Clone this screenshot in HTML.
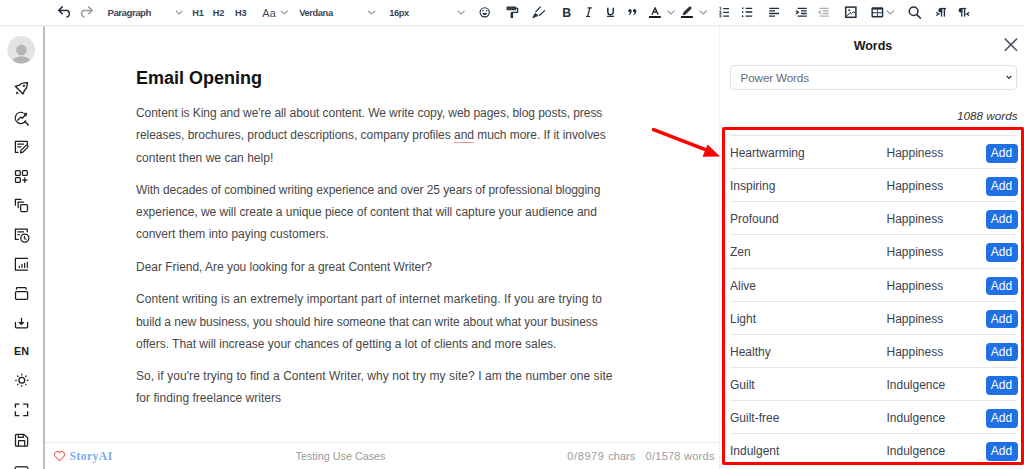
<!DOCTYPE html>
<html><head><meta charset="utf-8">
<style>
*{margin:0;padding:0;box-sizing:border-box}
html,body{width:1024px;height:469px;overflow:hidden;background:#fff;font-family:"Liberation Sans",sans-serif}
.abs{position:absolute}
#tb{position:absolute;left:0;top:0;width:1024px;height:26px;border-bottom:1px solid #ececec}
#sb{position:absolute;left:0;top:26px;width:43px;height:443px}
#sbline{position:absolute;left:43px;top:26px;width:2px;height:443px;background:#bdbdc1}
#ed{position:absolute;left:45px;top:26px;width:675px;height:443px;border-right:1px dotted #e2e2e2}
#ed h1{position:absolute;left:91px;top:41.5px;font-size:18px;line-height:20px;font-weight:bold;color:#111}
#txt{position:absolute;left:91px;top:76.2px;width:560px;font-size:12px;line-height:22.15px;color:#474747}
#txt p{margin-bottom:10.4px;white-space:nowrap}
#foot{position:absolute;left:0;top:416px;width:674px;border-top:1px dotted #d9d9d9;height:27px}
#panel{position:absolute;left:720px;top:26px;width:304px;height:443px}
.row{position:absolute;left:10px;width:287px;height:33.15px;border-top:1px solid #e6e6e6}
.row .w{position:absolute;left:0;top:1px;font-size:12px;line-height:32px;color:#3b4250}
.row .c{position:absolute;left:156.5px;top:1px;font-size:12px;line-height:32px;color:#3b4250}
.row .b{position:absolute;left:255.5px;top:8px;width:32px;height:18.5px;border-radius:4px;background:#1f6fe5;color:#fff;font-size:12px;line-height:18.5px;text-align:center}
</style></head><body>
<div id="tb">
<svg class="abs" style="left:0;top:0" width="1024" height="26" viewBox="0 0 1024 26" fill="none" stroke="#222f3e" stroke-width="1.5" stroke-linecap="round" stroke-linejoin="round">
  <!-- undo -->
  <path d="M62.3 6.9L58.7 10.4L62.3 13.8M58.9 10.4H65.2A3.3 3.3 0 0 1 66.9 16.9"/>
  <!-- redo -->
  <path d="M88.6 6.9L92.2 10.4L88.6 13.8M92 10.4H85.7A3.3 3.3 0 0 0 84 16.9" stroke="#9aa0a6"/>
  <!-- chevrons -->
  <g stroke="#8a9099" stroke-width="1.1">
    <path d="M176.2 11.2L179.1 13.9L182 11.2"/>
    <path d="M281.2 11.2L284.3 13.9L287.4 11.2"/>
    <path d="M368.2 11.2L371.5 13.9L374.8 11.2"/>
    <path d="M457.8 11.2L461 13.9L464.2 11.2"/>
    <path d="M667.8 10.8L671 13.8L674.2 10.8"/>
    <path d="M700 10.8L703.3 13.8L706.6 10.8"/>
    <path d="M887 10.8L890.4 13.8L893.8 10.8"/>
  </g>
  <!-- emoji -->
  <circle cx="484.7" cy="12.35" r="4.6" stroke-width="1.2"/>
  <circle cx="482.8" cy="10.7" r="0.75" fill="#222f3e" stroke="none"/>
  <circle cx="486.7" cy="10.7" r="0.75" fill="#222f3e" stroke="none"/>
  <path d="M482.5 13.1H487A2.25 2.1 0 0 1 482.5 13.1Z" fill="#222f3e" stroke="none"/>
  <!-- paint roller -->
  <rect x="506.6" y="6.5" width="9.6" height="3.8" rx="0.6" fill="#222f3e" stroke="none"/><rect x="507.9" y="7.5" width="0.8" height="0.7" fill="#8a929c" stroke="none"/><rect x="507.9" y="8.9" width="0.8" height="0.7" fill="#8a929c" stroke="none"/><rect x="509.5" y="8.2" width="0.8" height="0.7" fill="#8a929c" stroke="none"/><rect x="511.1" y="7.5" width="0.8" height="0.7" fill="#8a929c" stroke="none"/><rect x="511.1" y="8.9" width="0.8" height="0.7" fill="#8a929c" stroke="none"/><rect x="512.7" y="8.2" width="0.8" height="0.7" fill="#8a929c" stroke="none"/><rect x="514.3" y="7.5" width="0.8" height="0.7" fill="#8a929c" stroke="none"/><rect x="514.3" y="8.9" width="0.8" height="0.7" fill="#8a929c" stroke="none"/>
  <path d="M516.2 8.4H517.6V12.3H511.8V17.4" stroke-width="1.3" stroke-linecap="butt"/>
  <rect x="510.6" y="13" width="2.5" height="5" fill="#222f3e" stroke="none"/>
  <!-- brush -->
  <path d="M540.3 6.8L535.8 11.8M544.6 10.6L539.6 15.3" stroke-width="1.2"/>
  <path d="M533 17.4L535 13.6L537.8 15.3Z" fill="#222f3e" stroke="#222f3e" stroke-width="1"/>
  <!-- A underline -->
  <path d="M652.2 14.3L655.1 7.8L658 14.3M653.3 12H657" stroke-width="1.4"/>
  <path d="M649 17H660.8" stroke="#000" stroke-width="1.8" stroke-linecap="butt"/>
  <!-- highlighter -->
  <path d="M683.2 14.4L684 12.3L689.3 7.2A1.1 1.1 0 0 1 690.9 8.7L685.6 14Z" fill="#222f3e" stroke="#222f3e" stroke-width="1"/>
  <path d="M681 17H692.9" stroke="#000" stroke-width="1.8" stroke-linecap="butt"/>
  <!-- numbered list -->
  <g stroke-width="1.3" stroke-linecap="butt">
    <path d="M723.2 8.6H729M723.2 12.4H729M723.2 16.1H729"/>
    <path d="M742 8.3H743.4M742 12H743.4M742 16.2H743.4" stroke-width="1.6"/>
    <path d="M745.6 8.3H752.2M745.6 12H752.2M745.6 16.2H752.2"/>
    <path d="M769.2 8.3H779M769.2 10.9H775M769.2 13.5H779M769.2 16.2H775"/>
    <path d="M797.6 8.3H806.8M801 10.9H806.8M801 13.5H806.8M797.6 16.2H806.8"/>
    <path d="M819.5 8.3H828.7M822.8 10.9H828.7M822.8 13.5H828.7M819.5 16.2H828.7" stroke="#aab0b6"/>
  </g>
  <path d="M796.3 10.9L798.6 12.2L796.3 13.6" stroke-width="1.3"/>
  <path d="M820.8 10.9L818.5 12.2L820.8 13.6" stroke-width="1.2" stroke="#aab0b6"/>
  <path d="M719.8 7.6L720.7 7.2V9.8M719.7 11.3H721.3L719.7 13.4H721.4M719.7 14.9H721.3L720.4 15.9L721.3 16.9H719.7" stroke-width="0.8"/>
  <!-- image -->
  <rect x="845.7" y="7.1" width="10.2" height="10.2" stroke-width="1.5" stroke-linejoin="miter"/>
  <circle cx="849.2" cy="10.3" r="1" fill="#222f3e" stroke="none"/>
  <path d="M846.5 16.3L850.2 12.6L851.5 13.8L853.6 11.6L855.2 13.4" stroke-width="1"/>
  <!-- table -->
  <rect x="871.4" y="7.3" width="11.9" height="10.1" rx="1.4" fill="#222f3e" stroke="none"/>
  <rect x="872.9" y="9.6" width="4.1" height="2.6" fill="#fff" stroke="none"/>
  <rect x="877.8" y="9.6" width="4.1" height="2.6" fill="#fff" stroke="none"/>
  <rect x="872.9" y="13.2" width="4.1" height="2.7" fill="#fff" stroke="none"/>
  <rect x="877.8" y="13.2" width="4.1" height="2.7" fill="#fff" stroke="none"/>
  <!-- search -->
  <circle cx="913.6" cy="11.3" r="4.3" stroke-width="1.5"/>
  <path d="M916.8 14.6L920.4 18.1" stroke-width="1.5"/>
</svg>
<div class="abs" style="left:107.5px;top:6px;font-size:9.6px;line-height:14px;font-weight:bold;letter-spacing:-0.45px;color:#3c4656">Paragraph</div>
<div class="abs" style="left:192.3px;top:6.3px;font-size:9.2px;line-height:14px;font-weight:bold;color:#3c4656;letter-spacing:-0.1px">H1</div>
<div class="abs" style="left:212.8px;top:6.3px;font-size:9.2px;line-height:14px;font-weight:bold;color:#3c4656;letter-spacing:-0.1px">H2</div>
<div class="abs" style="left:235px;top:6.3px;font-size:9.2px;line-height:14px;font-weight:bold;color:#3c4656;letter-spacing:-0.1px">H3</div>
<div class="abs" style="left:262.3px;top:5px;font-size:11px;line-height:16px;color:#474c54">Aa</div>
<div class="abs" style="left:299.3px;top:5.7px;font-size:9.3px;line-height:14px;font-weight:bold;letter-spacing:-0.4px;color:#3c4656">Verdana</div>
<div class="abs" style="left:389.3px;top:5.7px;font-size:9.3px;line-height:14px;font-weight:bold;letter-spacing:-0.4px;color:#3c4656">16px</div>
<div class="abs" style="left:562.2px;top:5px;font-size:12.3px;line-height:16px;font-weight:bold;color:#222f3e">B</div>
<svg class="abs" style="left:0;top:0" width="1024" height="26" viewBox="0 0 1024 26" fill="#222f3e" stroke="none">
  <path d="M587.6 7.3H591.8V8.4H587.6Z M586 15.9H590.2V17H586Z M589.3 7.8H590.6L588.2 16.5H586.9Z"/>
  <path d="M607.8 7.8V11.9A2.75 2.75 0 0 0 613.3 11.9V7.8" fill="none" stroke="#222f3e" stroke-width="1.5"/>
  <rect x="607" y="15.7" width="7" height="1.3"/>
  <path d="M628.2 10.8A1.75 1.75 0 1 1 631.7 10.8C631.7 12.9 630.6 14.4 629.1 15.2L628.6 14.5C629.4 13.9 629.9 13.2 630 12.5A1.75 1.75 0 0 1 628.2 10.8Z"/>
  <path d="M632.9 10.8A1.75 1.75 0 1 1 636.4 10.8C636.4 12.9 635.3 14.4 633.8 15.2L633.3 14.5C634.1 13.9 634.6 13.2 634.7 12.5A1.75 1.75 0 0 1 632.9 10.8Z"/>
  <path d="M942.2 8H940.6A2.2 2.2 0 0 0 940.6 12.4H942.2Z"/>
  <rect x="940.9" y="7.9" width="5.1" height="1.1"/>
  <rect x="940.9" y="8" width="1.3" height="8.6"/>
  <rect x="943.7" y="8" width="1.4" height="8.6"/>
  <path d="M936.3 12.3L938.9 13.95L936.3 15.6" fill="none" stroke="#222f3e" stroke-width="1.2"/>
  <path d="M962.4 8H960.8A2.2 2.2 0 0 0 960.8 12.4H962.4Z"/>
  <rect x="961.1" y="7.9" width="5.1" height="1.1"/>
  <rect x="961.1" y="8" width="1.3" height="8.6"/>
  <rect x="963.9" y="8" width="1.4" height="8.6"/>
  <path d="M969.2 12.3L966.6 13.95L969.2 15.6" fill="none" stroke="#222f3e" stroke-width="1.2"/>
</svg>
</div>
<div id="sb">
<svg class="abs" style="left:0;top:0" width="43" height="443" viewBox="0 26 43 443" fill="none" stroke="#1c1c1c" stroke-width="1.25" stroke-linecap="round" stroke-linejoin="round">
  <!-- avatar -->
  <circle cx="21.2" cy="49.8" r="13.8" fill="#e3e3e3" stroke="none"/>
  <clipPath id="av"><circle cx="21.2" cy="49.8" r="13.8"/></clipPath>
  <circle cx="21.5" cy="50" r="5.3" fill="#b5b5b5" stroke="none"/>
  <ellipse cx="21.5" cy="61.5" rx="8.9" ry="5.3" fill="#b5b5b5" stroke="none" clip-path="url(#av)"/>
  <!-- rocket (offset 10,76) -->
  <g transform="translate(10 76)">
    <path d="M5.3 10.3L9.4 9.2C11 7.4 13.6 6.5 17.4 6.6C17.4 10.2 16.4 12.9 14.4 14.5L13 18Z" stroke-width="1.35"/>
    <circle cx="13.9" cy="9.9" r="1.1" fill="#1c1c1c" stroke="none"/>
    <path d="M6.3 17.4L6.9 15.8L8.1 17Z" fill="#1c1c1c" stroke-width="0.7"/>
  </g>
  <!-- search chart (10,106) -->
  <g transform="translate(10 106)">
    <path d="M12.7 6.6A5.6 5.6 0 1 0 15.6 14.9"/>
    <path d="M7.6 14.2L10.6 11.1L12.1 12.3L15.6 8.7"/>
    <path d="M14 7.4L16.6 7.1L16.3 9.8Z" fill="#1c1c1c" stroke-width="0.8"/>
    <path d="M15 15.6L18.3 18.9" stroke-width="1.4"/>
  </g>
  <!-- edit (10,136) -->
  <g transform="translate(10 136)">
    <path d="M8 16.4H5.4V5.3H17.3V8.8"/>
    <path d="M7.8 8H13.6M7.8 10.8H11"/>
    <path d="M10.6 16.9L10.9 14.4L15.8 9.6A1.2 1.2 0 0 1 17.6 11.4L12.8 16.2Z"/>
  </g>
  <!-- grid plus (10,165) -->
  <g transform="translate(10 165)">
    <rect x="5.5" y="5.5" width="4.8" height="4.8" rx="0.9"/>
    <rect x="12.5" y="5.5" width="4.8" height="4.8" rx="0.9"/>
    <rect x="5.5" y="12.5" width="4.8" height="4.8" rx="0.9"/>
    <path d="M14.8 12.9V17.3M12.6 15.1H17" stroke-width="1.3"/>
  </g>
  <!-- copy (10,194) -->
  <g transform="translate(10 194)">
    <path d="M5.4 11.2V5.4H11"/>
    <path d="M8.2 13.6V8.2H13.6"/>
    <rect x="10.6" y="10.6" width="6.9" height="6.9" rx="1.2"/>
  </g>
  <!-- doc clock (10,224) -->
  <g transform="translate(10 224)">
    <path d="M8.3 15.4H5.4V5.1H17.3V7.8"/>
    <path d="M7.8 7.9H13.6M7.8 10.5H9.2"/>
    <circle cx="14.8" cy="14.1" r="4.1"/>
    <path d="M14.4 12.2V14.7L16.3 15.2" stroke-width="1.1"/>
  </g>
  <!-- chart (10,252) -->
  <g transform="translate(10 252)">
    <path d="M17.5 6.4H5.4V18.2H17.5"/>
    <path d="M9.3 14.2V15.4M12 12.4V15.4M14.6 11.4V15.4M17.3 10.2V15.4" stroke-width="1.2"/>
  </g>
  <!-- tray (10,281) -->
  <g transform="translate(10 281)">
    <path d="M6.5 8.2V7.5A0.8 0.8 0 0 1 7.3 6.7H15.3A0.8 0.8 0 0 1 16.1 7.5V8.2"/>
    <rect x="5.5" y="10.6" width="12.1" height="7.7" rx="1"/>
  </g>
  <!-- download (10,311) -->
  <g transform="translate(10 311)">
    <path d="M5.5 11.4V16.1A0.8 0.8 0 0 0 6.3 16.9H16.8A0.8 0.8 0 0 0 17.6 16.1V11.4"/>
    <path d="M11.5 7V12"/>
    <path d="M9.2 11.5H13.9L11.55 13.7Z" fill="#1c1c1c" stroke-width="0.9"/>
  </g>
  <!-- sun (10,368) -->
  <g transform="translate(10.8 369.5)">
    <circle cx="11" cy="10.8" r="2.9" stroke-width="1.3"/>
    <path d="M11 4.6V5.4M11 16.2V17M4.8 10.8H5.6M16.4 10.8H17.2M6.7 6.5L7.2 7M14.8 14.6L15.3 15.1M15.3 6.5L14.8 7M7.2 14.6L6.7 15.1" stroke-width="1.2"/>
  </g>
  <!-- fullscreen (10,398) -->
  <g transform="translate(10 398)">
    <path d="M5.4 9.7V6.2H9.3M13.2 6.2H17.6V9.7M17.6 13.2V17.6H13.2M9.3 17.6H5.4V13.2" stroke-width="1.3" stroke-linecap="butt" stroke-linejoin="miter"/>
  </g>
  <!-- save (10,428) -->
  <g transform="translate(10 428)">
    <path d="M6.4 6.4H13.9L17.6 9.8V17.2A0.9 0.9 0 0 1 16.7 18.1H6.4A0.9 0.9 0 0 1 5.5 17.2V7.3A0.9 0.9 0 0 1 6.4 6.4Z"/>
    <path d="M8.3 6.6V9.4H13.2V6.6"/>
    <path d="M8.5 18V13.2A0.7 0.7 0 0 1 9.2 12.5H14A0.7 0.7 0 0 1 14.7 13.2V18"/>
  </g>
  <!-- last partial -->
  <path d="M15.2 470V468.3A1.5 1.5 0 0 1 16.7 466.8H26.3A1.5 1.5 0 0 1 27.8 468.3V470" stroke="#444" stroke-width="1.5"/>
</svg>
<div class="abs" style="left:14px;top:-0.5px;width:16px;font-size:10.8px;line-height:16px;top:316.7px;font-weight:bold;color:#1c1c1c">EN</div>
</div>
<div id="sbline"></div>
<div class="abs" style="left:0;top:26px;width:1024px;height:1px;border-top:1px dotted #eeeeee"></div>
<div id="ed">
  <h1 style="position:absolute">Email Opening</h1>
  <div id="txt">
    <p><span style="letter-spacing:-0.051px">Content is King and we're all about content. We write copy, web pages, blog posts, press</span><br><span style="letter-spacing:-0.036px">releases, brochures, product descriptions, company profiles <span style="text-decoration:underline;text-decoration-color:#f59393;text-decoration-thickness:1.4px;text-underline-offset:2.5px;">and</span> much more. If it involves</span><br><span style="letter-spacing:0.021px">content then we can help!</span></p>
    <p><span style="letter-spacing:-0.078px">With decades of combined writing experience and over 25 years of professional blogging</span><br><span style="letter-spacing:-0.032px">experience, we will create a unique piece of content that will capture your audience and</span><br><span style="letter-spacing:0px">convert them into paying customers.</span></p>
    <p><span style="letter-spacing:-0.025px">Dear Friend, Are you looking for a great Content Writer?</span></p>
    <p><span style="letter-spacing:0.103px">Content writing is an extremely important part of internet marketing. If you are trying to</span><br><span style="letter-spacing:-0.054px">build a new business, you should hire someone that can write about what your business</span><br><span style="letter-spacing:-0.017px">offers. That will increase your chances of getting a lot of clients and more sales.</span></p>
    <p><span style="letter-spacing:0.068px">So, if you're trying to find a Content Writer, why not try my site? I am the number one site</span><br><span style="letter-spacing:0.036px">for finding freelance writers</span></p>
  </div>
  <div id="foot">
  <svg class="abs" style="left:8px;top:7px" width="13" height="12" viewBox="0 0 13 12"><path d="M6.5 10.6L2.2 6.4A2.6 2.6 0 0 1 6.5 2.6A2.6 2.6 0 0 1 10.8 6.4Z" fill="none" stroke="#f07070" stroke-width="1.2" stroke-linejoin="round"/></svg>
  <div class="abs" style="left:24.5px;top:5px;font-family:'Liberation Serif',serif;font-size:11.5px;line-height:16px;font-weight:bold;letter-spacing:0.5px;color:#78aaf0">StoryAI</div>
  <div class="abs" style="left:250.5px;top:5px;font-size:10.8px;line-height:16px;color:#9a9a9a">Testing Use Cases</div>
  <div class="abs" style="left:522.3px;top:5px;font-size:11px;line-height:16px;color:#9a9a9a;white-space:pre;letter-spacing:0.6px">0/8979</div>
  <div class="abs" style="left:563.3px;top:5px;font-size:11px;line-height:16px;color:#9a9a9a;white-space:pre">chars</div>
  <div class="abs" style="left:600.6px;top:5px;font-size:11px;line-height:16px;color:#9a9a9a;white-space:pre;letter-spacing:0.25px">0/1578 words</div>
</div>
</div>
<div id="panel">
  <div class="abs" style="left:1px;top:11px;width:304px;text-align:center;font-size:12.5px;line-height:18px;font-weight:bold;color:#1a1a1a">Words</div>
  <svg class="abs" style="left:284px;top:12px" width="14" height="14" viewBox="0 0 14 14"><path d="M0.8 0.6L13 12.8M13 0.6L0.8 12.8" stroke="#50555f" stroke-width="1.6" fill="none"/></svg>
  <div class="abs" style="left:10px;top:39px;width:287px;height:25px;border:1px solid #dee2e6;border-radius:4px"></div>
  <div class="abs" style="left:20.6px;top:39px;font-size:11.7px;letter-spacing:-0.15px;line-height:25px;color:#666c74">Power Words</div>
  <svg class="abs" style="left:286px;top:49px" width="6" height="5" viewBox="0 0 6 5"><path d="M0.8 1L3 3.4L5.2 1" stroke="#333" stroke-width="1.3" fill="none"/></svg>
  <div class="abs" style="right:6.5px;top:82px;font-size:11.7px;line-height:16px;font-style:italic;color:#333">1088 words</div>
  <div class="abs" style="left:2px;top:101px;width:302px;height:338px;border:3px solid #ff0000;border-radius:2px"></div>
  <div class="row" style="top:109.00px"><span class="w">Heartwarming</span><span class="c">Happiness</span><span class="b">Add</span></div>
  <div class="row" style="top:142.15px"><span class="w">Inspiring</span><span class="c">Happiness</span><span class="b">Add</span></div>
  <div class="row" style="top:175.30px"><span class="w">Profound</span><span class="c">Happiness</span><span class="b">Add</span></div>
  <div class="row" style="top:208.45px"><span class="w">Zen</span><span class="c">Happiness</span><span class="b">Add</span></div>
  <div class="row" style="top:241.60px"><span class="w">Alive</span><span class="c">Happiness</span><span class="b">Add</span></div>
  <div class="row" style="top:274.75px"><span class="w">Light</span><span class="c">Happiness</span><span class="b">Add</span></div>
  <div class="row" style="top:307.90px"><span class="w">Healthy</span><span class="c">Happiness</span><span class="b">Add</span></div>
  <div class="row" style="top:341.05px"><span class="w">Guilt</span><span class="c">Indulgence</span><span class="b">Add</span></div>
  <div class="row" style="top:374.20px"><span class="w">Guilt-free</span><span class="c">Indulgence</span><span class="b">Add</span></div>
  <div class="row" style="top:407.35px"><span class="w">Indulgent</span><span class="c">Indulgence</span><span class="b">Add</span></div>
</div>
<svg class="abs" style="left:0;top:0;z-index:5" width="1024" height="469" viewBox="0 0 1024 469"><path d="M653.6 129.6L708 150.6" stroke="#ff0000" stroke-width="3.6" stroke-linecap="round" fill="none"/><path d="M720 156.4L707.6 144.6L702.5 156.8Z" fill="#ff0000"/></svg>
</body></html>
